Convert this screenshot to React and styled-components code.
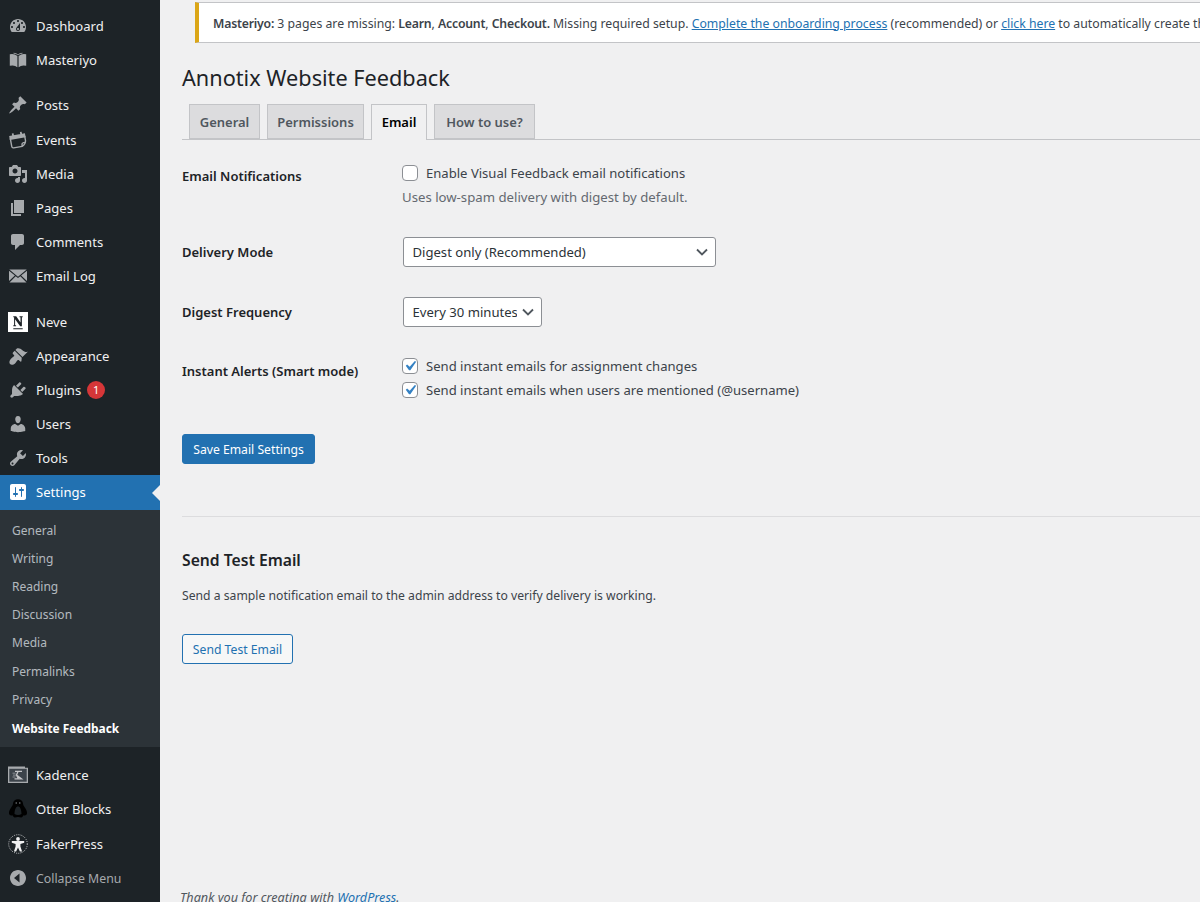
import React from "react";
import styled, { createGlobalStyle } from "styled-components";

const GlobalStyle = createGlobalStyle`
  html, body {
    margin: 0;
    padding: 0;
    height: 902px;
    overflow: hidden;
    background: #f0f0f1;
    color: #3c434a;
    font-family: "Noto Sans", "Open Sans", sans-serif;
    font-size: 13px;
  }
  * { box-sizing: border-box; }
`;

const CHECK =
  "url(\"data:image/svg+xml;utf8,<svg xmlns='http://www.w3.org/2000/svg' viewBox='0 0 20 20'><path d='M14.83 4.89l1.34.94-5.81 8.38H9.02L5.78 9.67l1.34-1.25 2.57 2.4z' fill='%233582c4'/></svg>\")";

// layout
const Shell = styled.div`
  display: flex;
  width: 1200px;
  height: 902px;
  overflow: hidden;
`;

const Sidebar = styled.nav`
  flex: 0 0 160px;
  display: flex;
  flex-direction: column;
  padding-top: 9px;
  background: #1d2327;
`;

const Separator = styled.div`
  flex: 0 0 ${(p) => p.$h || 11}px;
`;

const MenuItem = styled.a`
  flex: 0 0 34.2px;
  position: relative;
  display: flex;
  align-items: center;
  gap: 8px;
  padding-left: 8px;
  padding-top: ${(p) => (p.$muted ? "1px" : "0")};
  padding-bottom: ${(p) => (p.$active ? "1px" : "0")};
  color: ${(p) => (p.$muted ? "#a7aaad" : p.$active ? "#fff" : "#f0f0f1")};
  background: ${(p) => (p.$active ? "#2271b1" : "transparent")};
  font-size: ${(p) => (p.$muted ? "12.3px" : "13.1px")};
`;

const IconSlot = styled.span`
  flex: 0 0 20px;
  width: 20px;
  height: 20px;
  display: flex;
  align-items: center;
  justify-content: center;
  color: ${(p) => (p.$active ? "#fff" : "#a7aaad")};

  svg {
    width: 20px;
    height: 20px;
    fill: currentColor;
    display: block;
  }
`;

const ActiveArrow = styled.span`
  position: absolute;
  right: 0;
  top: 50%;
  margin-top: -8px;
  border: 8px solid transparent;
  border-right-color: #f0f0f1;
  border-left-width: 0;
`;

const Badge = styled.span`
  display: inline-flex;
  align-items: center;
  justify-content: center;
  width: 18px;
  height: 18px;
  margin-left: -2px;
  border-radius: 50%;
  background: #d63638;
  color: #fff;
  font-size: 11px;
`;

const SubMenu = styled.div`
  flex: 0 0 237px;
  display: flex;
  flex-direction: column;
  padding-top: 6.5px;
  background: #2c3338;
`;

const SubItem = styled.a`
  flex: 0 0 28.2px;
  display: flex;
  align-items: center;
  padding-left: 12px;
  font-size: ${(p) => (p.$current ? "11.9px" : "12px")};
  font-weight: ${(p) => (p.$current ? 700 : 400)};
  color: ${(p) => (p.$current ? "#fff" : "rgba(240, 246, 252, 0.7)")};
`;

const Main = styled.main`
  flex: 1;
  min-width: 0;
  display: flex;
  flex-direction: column;
  padding: 2px 0 0 22px;

  > * {
    flex-shrink: 0;
  }
`;

const Notice = styled.div`
  height: 41px;
  width: 1200px;
  margin-left: 13px;
  padding: 1px 0 0 14px;
  display: flex;
  align-items: center;
  white-space: nowrap;
  background: #fff;
  border: 1px solid #c3c4c7;
  border-left: 4px solid #dba617;
  color: #3c434a;
  font-size: 12.25px;

  b { font-weight: 600; letter-spacing: -0.2px; }
  a { color: #2271b1; text-decoration: underline; }
`;

const Title = styled.h1`
  margin: 18px 0 0;
  height: 34px;
  line-height: 34px;
  font-size: 21.7px;
  font-weight: 400;
  color: #1d2327;
`;

const TabBar = styled.div`
  display: flex;
  gap: 7px;
  height: 36px;
  margin-top: 9px;
  padding-left: 7px;
  border-bottom: 1px solid #c3c4c7;
`;

const Tab = styled.a`
  width: ${(p) => p.$w}px;
  height: ${(p) => (p.$active ? "36px" : "35px")};
  padding-bottom: ${(p) => (p.$active ? "1px" : "0")};
  display: flex;
  align-items: center;
  justify-content: center;
  background: ${(p) => (p.$active ? "#f0f0f1" : "#dcdcde")};
  border: 1px solid #c3c4c7;
  border-bottom: ${(p) => (p.$active ? "none" : "1px solid #c3c4c7")};
  color: ${(p) => (p.$active ? "#000" : "#50575e")};
  font-size: 13px;
  font-weight: 600;
`;

const FormRow = styled.div`
  display: grid;
  grid-template-columns: 220px 1fr;
  height: ${(p) => p.$h}px;
`;

const RowLabel = styled.div`
  padding-top: ${(p) => p.$top}px;
  line-height: 18px;
  font-size: 13px;
  font-weight: 600;
  color: #1d2327;
`;

const Field = styled.div`
  display: flex;
  flex-direction: column;
  align-items: flex-start;
  padding-top: ${(p) => p.$top}px;
`;

const CheckLabel = styled.label`
  display: flex;
  align-items: center;
  gap: 8px;
  height: 24px;
  font-size: 13.08px;
  color: #3c434a;
`;

const CheckBox = styled.input`
  appearance: none;
  width: 16px;
  height: 16px;
  margin: 0;
  background: #fff;
  border: 1px solid #8c8f94;
  border-radius: 4px;

  &:checked {
    background-image: ${CHECK};
    background-size: 20px 20px;
    background-position: center;
  }
`;

const Hint = styled.p`
  margin: 0;
  line-height: 24px;
  font-size: 13.2px;
  color: #646970;
`;

const SelectWrap = styled.div`
  position: relative;
  margin-left: 1px;
  width: ${(p) => p.$w}px;

  svg {
    position: absolute;
    right: 8px;
    top: 10px;
    width: 12px;
    height: 10px;
    pointer-events: none;
  }
`;

const Select = styled.select`
  appearance: none;
  display: block;
  width: 100%;
  height: 30px;
  padding: 0 24px 0 8.5px;
  background: #fff;
  border: 1px solid #8c8f94;
  border-radius: 3px;
  font-family: inherit;
  font-size: 13.1px;
  color: #2c3338;
`;

const Button = styled.button`
  display: block;
  width: ${(p) => p.$w}px;
  height: 30px;
  padding: 0;
  border: 1px solid #2271b1;
  border-radius: 3px;
  background: ${(p) => (p.$primary ? "#2271b1" : "#f6f7f7")};
  color: ${(p) => (p.$primary ? "#fff" : "#2271b1")};
  font-family: inherit;
  font-size: 12.2px;
`;

const Rule = styled.hr`
  width: 100%;
  margin: 52px 0 0;
  height: 1px;
  border: none;
  background: #dcdcde;
`;

const SectionTitle = styled.h2`
  margin: 32px 0 0;
  line-height: 22px;
  font-size: 15.7px;
  font-weight: 600;
  color: #1d2327;
`;

const SectionText = styled.p`
  margin: 15px 0 0;
  line-height: 20px;
  font-size: 12.2px;
  color: #3c434a;
`;

const ButtonSpacer = styled.div`
  height: ${(p) => p.$h}px;
`;

const Footer = styled.footer`
  margin: 0 0 0 -2px;
  font-style: italic;
  font-size: 12.65px;
  line-height: 18px;
  color: #50575e;

  a { color: #2271b1; text-decoration: none; }
`;

// icons
const paths = {
  dashboard:
    "M3.76 16h12.48c1.1-1.37 1.76-3.11 1.76-5 0-4.42-3.58-8-8-8s-8 3.58-8 8c0 1.89.66 3.63 1.76 5zM10 4c.55 0 1 .45 1 1s-.45 1-1 1-1-.45-1-1 .45-1 1-1zM6 6c.55 0 1 .45 1 1s-.45 1-1 1-1-.45-1-1 .45-1 1-1zm8 0c.55 0 1 .45 1 1s-.45 1-1 1-1-.45-1-1 .45-1 1-1zm-5.37 5.55L12 7v6c0 1.1-.9 2-2 2s-2-.9-2-2c0-.57.24-1.08.63-1.45zM4 10c.55 0 1 .45 1 1s-.45 1-1 1-1-.45-1-1 .45-1 1-1zm12 0c.55 0 1 .45 1 1s-.45 1-1 1-1-.45-1-1 .45-1 1-1zm-5 3c0-.55-.45-1-1-1s-1 .45-1 1 .45 1 1 1 1-.45 1-1z",
  book:
    "M1.8 4.2Q6.3 3.2 9.4 6v11.2Q6.3 14.5 1.8 15.8zM18.2 4.2Q13.7 3.2 10.6 6v11.2q3.1-2.7 7.6-1.4zM5.5 2.8Q8.3 2.7 10 4.6 11.7 2.7 14.5 2.8l0 .8Q12 3.7 10 5.2 8 3.7 5.5 3.6z",
  post:
    "M10.44 3.02l1.82-1.82 6.36 6.35-1.83 1.82c-1.05-.68-2.48-.57-3.41.36l-.75.75c-.92.93-1.04 2.35-.35 3.41l-1.83 1.82-2.41-2.41-2.8 2.79c-.42.42-3.38 2.71-3.8 2.29s1.86-3.39 2.28-3.81l2.79-2.79L4.1 9.36l1.83-1.82c1.05.69 2.48.57 3.4-.36l.75-.75c.93-.92 1.05-2.35.36-3.41z",
  media:
    "M13 11V4c0-.55-.45-1-1-1h-1.67L9 1H5L3.67 3H2c-.55 0-1 .45-1 1v7c0 .55.45 1 1 1h10c.55 0 1-.45 1-1zM7 4.5c1.38 0 2.5 1.12 2.5 2.5S8.38 9.5 7 9.5 4.5 8.38 4.5 7 5.62 4.5 7 4.5zM14 6h5v10.5c0 1.38-1.12 2.5-2.5 2.5S14 17.88 14 16.5s1.12-2.5 2.5-2.5c.17 0 .34.02.5.05V9h-3V6zm-4 8.05V13h2v3.5c0 1.38-1.12 2.5-2.5 2.5S7 17.88 7 16.5 8.12 14 9.5 14c.17 0 .34.02.5.05z",
  page: "M6 15V2h10v13H6zm-1 1h8v2H3V5h2v11z",
  comment:
    "M5 2h9c1.1 0 2 .9 2 2v7c0 1.1-.9 2-2 2h-2l-5 5v-5H5c-1.1 0-2-.9-2-2V4c0-1.1.9-2 2-2z",
  brush:
    "M14.48 11.06L7.41 3.99l1.5-1.5c.5-.56 2.3-.47 3.51.32 1.21.8 1.43 1.28 2.91 2.1 1.18.64 2.45 1.26 4.45.85zm-.71.71L6.7 4.7 4.93 6.47c-.39.39-.39 1.02 0 1.41l1.06 1.06c.39.39.39 1.03 0 1.42-.6.6-1.43 1.11-2.21 1.69-.35.26-.7.53-1.01.84-1.34 1.34-1.86 3.89-.74 5.19 1.12 1.3 3.65.79 4.99-.55.31-.31.57-.66.84-1.01.58-.78 1.09-1.61 1.69-2.21.39-.39 1.03-.39 1.42 0l1.06 1.06c.39.39 1.02.39 1.41 0z",
  plugin:
    "M13.11 4.36L9.87 7.6 8 5.73l3.24-3.24c.35-.34 1.05-.2 1.56.32.52.51.66 1.21.31 1.55zm-8 1.77l.91-1.12 9.01 9.01-1.19.84c-.71.71-2.63 1.16-3.82 1.16H6.14L4.9 17.26c-.59.59-1.54.59-2.12 0-.59-.58-.59-1.53 0-2.12l1.24-1.24v-3.88c0-1.13.4-3.19 1.09-3.89zm7.26 3.97l3.24-3.24c.34-.35 1.04-.21 1.55.31.52.51.66 1.21.31 1.55l-3.24 3.25z",
  users:
    "M10 9.25c-2.27 0-2.73-3.44-2.73-3.44C7 4.02 7.82 2 9.97 2c2.16 0 2.98 2.02 2.71 3.81 0 0-.41 3.44-2.68 3.44zm0 2.57L12.72 10c2.39 0 4.52 2.33 4.52 4.53v2.49s-3.65 1.13-7.24 1.13c-3.65 0-7.24-1.13-7.24-1.13v-2.49c0-2.25 1.94-4.53 4.43-4.53z",
  tools:
    "M16.68 9.77c-1.34 1.34-3.3 1.67-4.95.99l-5.41 6.52c-.99.99-2.59.99-3.58 0s-.99-2.59 0-3.57l6.52-5.42c-.68-1.65-.35-3.61.99-4.95 1.28-1.28 3.12-1.62 4.72-1.06l-2.89 2.89 2.82 2.82 2.86-2.87c.53 1.58.18 3.39-1.08 4.65zM3.81 16.21c.4.39 1.04.39 1.43 0 .4-.4.4-1.04 0-1.43-.39-.4-1.03-.4-1.43 0-.39.39-.39 1.03 0 1.43z",
  settings:
    "M18 16V4c0-1.1-.9-2-2-2H4c-1.1 0-2 .9-2 2v12c0 1.1.9 2 2 2h12c1.1 0 2-.9 2-2zM8 11h1c.55 0 1 .45 1 1s-.45 1-1 1H8v1.5c0 .28-.22.5-.5.5s-.5-.22-.5-.5V13H6c-.55 0-1-.45-1-1s.45-1 1-1h1V5.5c0-.28.22-.5.5-.5s.5.22.5.5V11zm5-2h-1c-.55 0-1-.45-1-1s.45-1 1-1h1V5.5c0-.28.22-.5.5-.5s.5.22.5.5V7h1c.55 0 1 .45 1 1s-.45 1-1 1h-1v5.5c0 .28-.22.5-.5.5s-.5-.22-.5-.5V9z",
  collapse:
    "M18 10c0-4.42-3.58-8-8-8s-8 3.58-8 8 3.58 8 8 8 8-3.58 8-8zm-6.5 4.5L6 10l5.5-4.5z",
};

const Icon = ({ name }) => (
  <svg viewBox="0 0 20 20">
    <path d={paths[name]} />
  </svg>
);

const EventsIcon = () => (
  <svg viewBox="0 0 20 20">
    <g transform="rotate(-10 10 10)">
      <path d="M2 4.5h16v4H2zM5 2.5h1.8v3H5zM13.2 2.5H15v3h-1.8z" />
      <path
        fill="none"
        stroke="currentColor"
        strokeWidth="1.4"
        d="M2.7 7v8.3c0 1 .7 1.7 1.7 1.7h8.6c2.2-.9 3.8-2.6 4.3-5V7M13 17c0-2 .4-3.3 1.5-3.3l2.8-.9"
      />
    </g>
  </svg>
);

const EmailIcon = () => (
  <svg viewBox="0 0 20 20">
    <path d="M1.3 3.6h17.4L10 10.7zM1 4.8v10.3l5.9-5.6zM19 4.8l-5.9 4.7L19 15.1zM7.7 10.2L1.5 16.4h17l-6.2-6.2L10 12.1z" />
  </svg>
);

const NeveLogo = () => (
  <svg viewBox="0 0 20 20">
    <rect width="20" height="20" fill="#fff" />
    <path
      fill="#1d2327"
      d="M5.3 4.2h2.9l4.3 6.2V5.2h-1v-1h3.2v1h-.8v9.1h-1.7L7.1 7.3v6h1v1H5.3v-1h.8V5.2h-.8zM5.3 16.2h9.4v1H5.3z"
    />
  </svg>
);

const KadenceLogo = () => (
  <svg viewBox="0 0 20 20">
    <path fill="#a7aaad" d="M0 1.5h17v1.3h3V18H0z" />
    <path fill="#3c434a" d="M1.3 3.8h17.4v12.9H1.3z" />
    <path
      fill="none"
      stroke="#c3c4c7"
      strokeWidth="1.3"
      d="M7 6.4h7M10 6.4l-1.5 3.7 1.8 3.7M8.5 10.1l5 3.7h-7"
    />
    <path stroke="#8c8f94" strokeWidth="1" d="M4.5 8.2h3M5 10.1h3M4.5 12h3" />
  </svg>
);

const OtterLogo = () => (
  <svg viewBox="0 0 20 20">
    <path
      fill="#000"
      fillRule="evenodd"
      d="M10 .3c2.9 0 4.8 1.8 5 4.3.1 1.4.7 2.3 1.8 4 1 1.5 2.6 4 2.2 6-.3 1.5-1.800 2.5-3.5 1.700-.6 1-1.300 2.200-2.300 2.200-1-.1-2.100-.5-3.200-.5s-2.200.4-3.200.5c-1 0-1.700-1.200-2.300-2.200C2.800 17.100 1.300 16.100 1 14.600c-.4-2 1.200-4.500 2.200-6 1.100-1.700 1.700-2.600 1.800-4C5.200 2.100 7.100.3 10 .3zM10 7.500c-2 0-3.300 2.500-3.500 7.500 2 1.300 5 1.300 7 0-.2-5-1.500-7.500-3.500-7.500z"
    />
    <circle cx="8.2" cy="4" r="0.7" fill="#8c8f94" />
    <circle cx="11.8" cy="4" r="0.7" fill="#8c8f94" />
  </svg>
);

const FakerLogo = () => (
  <svg viewBox="0 0 20 20">
    <circle
      cx="10"
      cy="10"
      r="9.3"
      fill="none"
      stroke="#f0f0f1"
      strokeWidth="0.8"
      strokeDasharray="1 1.2"
    />
    <circle cx="10" cy="5" r="1.9" fill="#f0f0f1" />
    <path
      fill="#f0f0f1"
      d="M3.8 7h12.4v1.7L12.4 10v2.5l1.7 5h-2.2L10 13.4l-1.9 4.1H5.9l1.7-5V10L3.8 8.700z"
    />
  </svg>
);

const Chevron = () => (
  <svg viewBox="0 0 12 10">
    <path d="M1 2.5l5 5 5-5" fill="none" stroke="#50575e" strokeWidth="1.8" />
  </svg>
);

const renderItem = (item) => (
  <MenuItem key={item.label} $active={item.active} $muted={item.muted}>
    <IconSlot $active={item.active}>{item.icon}</IconSlot>
    {item.label}
    {item.badge && <Badge>{item.badge}</Badge>}
    {item.active && <ActiveArrow />}
  </MenuItem>
);

const topItems = [
  { label: "Dashboard", icon: <Icon name="dashboard" /> },
  { label: "Masteriyo", icon: <Icon name="book" /> },
];

const contentItems = [
  { label: "Posts", icon: <Icon name="post" /> },
  { label: "Events", icon: <EventsIcon /> },
  { label: "Media", icon: <Icon name="media" /> },
  { label: "Pages", icon: <Icon name="page" /> },
  { label: "Comments", icon: <Icon name="comment" /> },
  { label: "Email Log", icon: <EmailIcon /> },
];

const adminItems = [
  { label: "Neve", icon: <NeveLogo /> },
  { label: "Appearance", icon: <Icon name="brush" /> },
  { label: "Plugins", icon: <Icon name="plugin" />, badge: "1" },
  { label: "Users", icon: <Icon name="users" /> },
  { label: "Tools", icon: <Icon name="tools" /> },
  { label: "Settings", icon: <Icon name="settings" />, active: true },
];

const subItems = [
  "General",
  "Writing",
  "Reading",
  "Discussion",
  "Media",
  "Permalinks",
  "Privacy",
  "Website Feedback",
];

const pluginItems = [
  { label: "Kadence", icon: <KadenceLogo /> },
  { label: "Otter Blocks", icon: <OtterLogo /> },
  { label: "FakerPress", icon: <FakerLogo /> },
  { label: "Collapse Menu", icon: <Icon name="collapse" />, muted: true },
];

const tabs = [
  { label: "General", w: 71 },
  { label: "Permissions", w: 97 },
  { label: "Email", w: 56, active: true },
  { label: "How to use?", w: 101 },
];

const App = () => {
  return (
    <>
      <GlobalStyle />
      <Shell>
        <Sidebar>
          {topItems.map(renderItem)}
          <Separator />
          {contentItems.map(renderItem)}
          <Separator />
          {adminItems.map(renderItem)}
          <SubMenu>
            {subItems.map((s) => (
              <SubItem key={s} $current={s === "Website Feedback"}>
                {s}
              </SubItem>
            ))}
          </SubMenu>
          <Separator $h={11.5} />
          {pluginItems.map(renderItem)}
        </Sidebar>
        <Main>
          <Notice>
            <span>
              <b>Masteriyo:</b> 3 pages are missing: <b>Learn</b>,{" "}
              <b>Account</b>, <b>Checkout.</b> Missing required setup.{" "}
              <a>Complete the onboarding process</a> (recommended) or{" "}
              <a>click here</a> to automatically create them.
            </span>
          </Notice>
          <Title>Annotix Website Feedback</Title>
          <TabBar>
            {tabs.map((t) => (
              <Tab key={t.label} $w={t.w} $active={t.active}>
                {t.label}
              </Tab>
            ))}
          </TabBar>

          <FormRow $h={97}>
            <RowLabel $top={27}>Email Notifications</RowLabel>
            <Field $top={21}>
              <CheckLabel>
                <CheckBox type="checkbox" />
                Enable Visual Feedback email notifications
              </CheckLabel>
              <Hint>Uses low-spam delivery with digest by default.</Hint>
            </Field>
          </FormRow>

          <FormRow $h={60}>
            <RowLabel $top={6}>Delivery Mode</RowLabel>
            <Field $top={0}>
              <SelectWrap $w={313}>
                <Select defaultValue="digest">
                  <option value="digest">Digest only (Recommended)</option>
                </Select>
                <Chevron />
              </SelectWrap>
            </Field>
          </FormRow>

          <FormRow $h={57}>
            <RowLabel $top={6}>Digest Frequency</RowLabel>
            <Field $top={0}>
              <SelectWrap $w={139}>
                <Select defaultValue="30">
                  <option value="30">Every 30 minutes</option>
                </Select>
                <Chevron />
              </SelectWrap>
            </Field>
          </FormRow>

          <FormRow $h={80}>
            <RowLabel $top={8}>Instant Alerts (Smart mode)</RowLabel>
            <Field $top={0}>
              <CheckLabel>
                <CheckBox type="checkbox" defaultChecked />
                Send instant emails for assignment changes
              </CheckLabel>
              <CheckLabel>
                <CheckBox type="checkbox" defaultChecked />
                Send instant emails when users are mentioned (@username)
              </CheckLabel>
            </Field>
          </FormRow>

          <Button $primary $w={133}>
            Save Email Settings
          </Button>
          <Rule />
          <SectionTitle>Send Test Email</SectionTitle>
          <SectionText>
            Send a sample notification email to the admin address to verify
            delivery is working.
          </SectionText>
          <ButtonSpacer $h={28} />
          <Button $w={111}>Send Test Email</Button>
          <ButtonSpacer $h={224} />
          <Footer>
            Thank you for creating with <a>WordPress</a>.
          </Footer>
        </Main>
      </Shell>
    </>
  );
};

export default App;
